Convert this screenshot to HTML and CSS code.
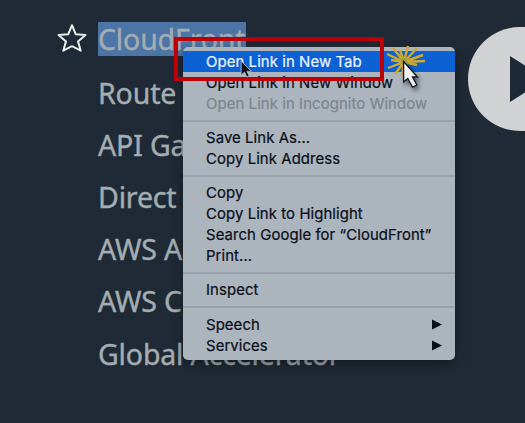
FILE: index.html
```
<!DOCTYPE html>
<html lang="en">
<head>
<meta charset="utf-8">
<title>Services</title>
<link rel="stylesheet" href="styles.css">
</head>
<body>
<ul class="services">
  <li><svg class="star" viewBox="0 0 32 30"><path d="M16 2.2L19.8 11.3L29.5 11.9L22 18.4L24.7 27.7L16 23.2L7.3 27.7L10 18.4L2.5 11.9L12.2 11.3Z"/></svg><span class="selected">CloudFront</span></li>
  <li>Route</li>
  <li>API Ga</li>
  <li>Direct</li>
  <li>AWS A</li>
  <li>AWS C</li>
  <li>Global Accelerator</li>
</ul>

<div class="play"><svg viewBox="0 0 57 104"><path d="M42 29V75L78 52Z"/></svg></div>

<div class="menu">
  <div class="item highlight">Open Link in New Tab</div>
  <div class="item">Open Link in New Window</div>
  <div class="item disabled">Open Link in Incognito Window</div>
  <div class="separator"></div>
  <div class="item">Save Link As...</div>
  <div class="item">Copy Link Address</div>
  <div class="separator"></div>
  <div class="item">Copy</div>
  <div class="item">Copy Link to Highlight</div>
  <div class="item">Search Google for “CloudFront”</div>
  <div class="item">Print...</div>
  <div class="separator"></div>
  <div class="item">Inspect</div>
  <div class="separator"></div>
  <div class="item">Speech<svg class="arrow" viewBox="0 0 10 10"><path d="M0 0L10 5L0 10Z"/></svg></div>
  <div class="item">Services<svg class="arrow" viewBox="0 0 10 10"><path d="M0 0L10 5L0 10Z"/></svg></div>
</div>

<div class="callout"></div>
<svg class="pointer" viewBox="0 0 14 20"><path d="M1 1V17L4.8 13.5L7.4 19L10 17.8L7.6 12.5H12.5Z"/></svg>
<svg class="click" viewBox="0 0 48 50">
  <path class="burst" d="M18 18L7 4M18 18L14 6M18 18L22 2M18 18L31 4M18 18L1 10M18 18L37 11M18 18L39 17M18 18L31 21M18 18L5 16M18 18L2 24M18 18L9 30M18 18L16 31"/>
  <path class="burst-center" d="M14 14L21 14L22 20L15 20Z"/>
  <path class="cursor" d="M17.6 17.5V38L21.8 34.5L26.5 43.2L30.8 41L26.5 33H31.5Z"/>
</svg>
</body>
</html>
```
FILE: styles.css
```
* { box-sizing: border-box; }

body {
  position: relative;
  width: 525px;
  height: 423px;
  margin: 0;
  overflow: hidden;
  background: #202a36;
  font-family: Inter, "Liberation Sans", sans-serif;
}

.services {
  margin: 0;
  padding: 14.4px 0 0 98px;
  list-style: none;
  color: #a3adb2;
  font: 28.5px/52.2px "Noto Sans", sans-serif;
  letter-spacing: -0.15px;
  -webkit-text-stroke: 0.4px #a3adb2;
}

.services li {
  display: flex;
  align-items: center;
  height: 52.2px;
  white-space: nowrap;
}

.star {
  width: 32px;
  height: 30px;
  margin: -4px 10px 0 -42px;
  fill: none;
  stroke: #e9edef;
  stroke-width: 2;
  stroke-linejoin: round;
}

.selected {
  width: 148px;
  height: 34px;
  margin-top: -2px;
  background: #4c74a5;
  line-height: 35px;
}

.play {
  position: absolute;
  top: 27px;
  left: 468px;
  width: 57px;
  height: 104px;
  border-radius: 52px 0 0 52px;
  background: #d1d2d3;
}

.play svg { display: block; width: 57px; height: 104px; fill: #1d2936; }

.menu {
  position: absolute;
  top: 47px;
  left: 183px;
  width: 272px;
  height: 313px;
  padding: 4px 0;
  border-radius: 5px;
  background: #acb4bd;
  box-shadow: 0 4px 12px rgba(0, 0, 0, 0.4);
  color: #080e19;
  font-size: 14.9px;
  letter-spacing: 0.09px;
  -webkit-text-stroke: 0.2px currentColor;
}

.item {
  display: flex;
  align-items: center;
  justify-content: space-between;
  height: 21px;
  padding: 0 13px 0 23px;
  white-space: nowrap;
}

.highlight { background: #0c61d4; color: #eef4fb; }

.disabled { color: #7c858f; }

.separator {
  height: 13.25px;
  padding-top: 5.5px;
}

.separator::before {
  content: "";
  display: block;
  height: 2px;
  background: #99a2ac;
}

.arrow { width: 10px; height: 11px; fill: #080e19; }

.callout {
  position: absolute;
  top: 37px;
  left: 174px;
  width: 210px;
  height: 44px;
  border: 4px solid #bd0008;
}

.pointer {
  position: absolute;
  top: 60px;
  left: 240px;
  width: 13px;
  height: 18px;
  fill: #0a101c;
  stroke: #b7bec7;
}

.click {
  position: absolute;
  top: 44px;
  left: 386px;
  width: 48px;
  height: 50px;
}

.burst { fill: none; stroke: #d3a928; stroke-width: 2.4; }

.burst-center { fill: #a3a246; }

.cursor {
  fill: #f1f1f1;
  stroke: #10151e;
  stroke-width: 1.3;
  filter: drop-shadow(2px 3px 2px rgba(0, 0, 0, 0.5));
}
```
